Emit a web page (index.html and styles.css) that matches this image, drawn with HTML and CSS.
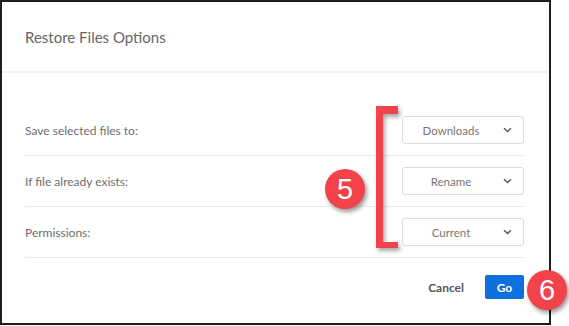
FILE: index.html
```html
<!DOCTYPE html>
<html lang="en">
<head>
    <meta charset="UTF-8">
    <meta name="viewport" content="width=device-width, initial-scale=1.0">
    <title>Restore Files Options</title>
    <link rel="stylesheet" href="styles.css">
</head>
<body>
    <div class="dialog">
        <div class="dialog-header">
            <h3>Restore Files Options</h3>
        </div>

        <div class="dialog-body">
            <div class="option-row">
                <span class="option-label">Save selected files to:</span>
                <div class="select">
                    <span>Downloads</span>
                    <svg class="caret" width="9" height="6" viewBox="0 0 9 6"><path d="M1 1.2 L4.5 4.6 L8 1.2" fill="none" stroke="#555" stroke-width="1.4"/></svg>
                </div>
            </div>
            <div class="option-row">
                <span class="option-label">If file already exists:</span>
                <div class="select">
                    <span>Rename</span>
                    <svg class="caret" width="9" height="6" viewBox="0 0 9 6"><path d="M1 1.2 L4.5 4.6 L8 1.2" fill="none" stroke="#555" stroke-width="1.4"/></svg>
                </div>
            </div>
            <div class="option-row">
                <span class="option-label">Permissions:</span>
                <div class="select">
                    <span>Current</span>
                    <svg class="caret" width="9" height="6" viewBox="0 0 9 6"><path d="M1 1.2 L4.5 4.6 L8 1.2" fill="none" stroke="#555" stroke-width="1.4"/></svg>
                </div>
            </div>
        </div>

        <div class="dialog-footer">
            <button class="btn-cancel">Cancel</button>
            <button class="btn-go">Go</button>
        </div>

        <!-- annotations -->
        <div class="bracket"></div>
        <div class="marker marker-5">5</div>
        <div class="marker marker-6">6</div>
    </div>
</body>
</html>
```

FILE: styles.css
```css
body {
    margin: 0;
    background: #ffffff;
    font-family: Lato, "Open Sans", Arial, sans-serif;
}
.dialog {
    position: relative;
    box-sizing: border-box;
    width: 551px;
    height: 325px;
    border: 2px solid #1e1e1e;
    background: #ffffff;
}
.dialog-header {
    height: 69px;
    display: flex;
    align-items: center;
    padding-left: 23px;
    border-bottom: 2px solid #f2f2f2;
}
.dialog-header h3 {
    margin: 0;
    font-size: 15px;
    font-weight: 400;
    color: #666666;
}
.dialog-body {
    padding: 32px 25px 0 23px;
}
.option-row {
    height: 50px;
    display: flex;
    align-items: center;
    justify-content: space-between;
    border-bottom: 1px solid #ececec;
}
.option-label {
    font-size: 12px;
    color: #6e6e6e;
}
.select {
    box-sizing: border-box;
    width: 122px;
    height: 28px;
    border: 1px solid #dcdcdc;
    border-radius: 3px;
    display: flex;
    align-items: center;
    padding: 0 11px 0 0;
    font-size: 11.5px;
    color: #777777;
}
.select span {
    flex: 1;
    text-align: center;
}
.caret {
    margin-left: 4px;
}
.dialog-footer {
    display: flex;
    justify-content: flex-end;
    align-items: center;
    gap: 21px;
    padding: 17px 25px 0 0;
}
.btn-cancel {
    border: none;
    background: none;
    padding: 0;
    font-family: inherit;
    font-size: 12px;
    font-weight: 700;
    color: #555555;
}
.btn-go {
    width: 39px;
    height: 24px;
    border: none;
    border-radius: 2px;
    background: #0f6fdc;
    color: #ffffff;
    font-family: inherit;
    font-size: 12px;
    font-weight: 700;
    padding: 0;
}
.bracket {
    position: absolute;
    left: 374px;
    top: 104px;
    width: 15px;
    height: 128px;
    border: 7px solid #f2434a;
    border-right: none;
    border-top-width: 8px;
    border-bottom-width: 6px;
    filter: drop-shadow(2px 3px 2px rgba(0, 0, 0, 0.35));
}
.marker {
    position: absolute;
    width: 40px;
    height: 40px;
    border-radius: 50%;
    background: #f2434a;
    color: #ffffff;
    font-family: "Liberation Sans", Arial, sans-serif;
    font-size: 29px;
    line-height: 40px;
    text-align: center;
    box-shadow: 2px 3px 4px rgba(0, 0, 0, 0.4);
}
.marker-5 {
    left: 323px;
    top: 167px;
}
.marker-6 {
    left: 525px;
    top: 268px;
}
```
